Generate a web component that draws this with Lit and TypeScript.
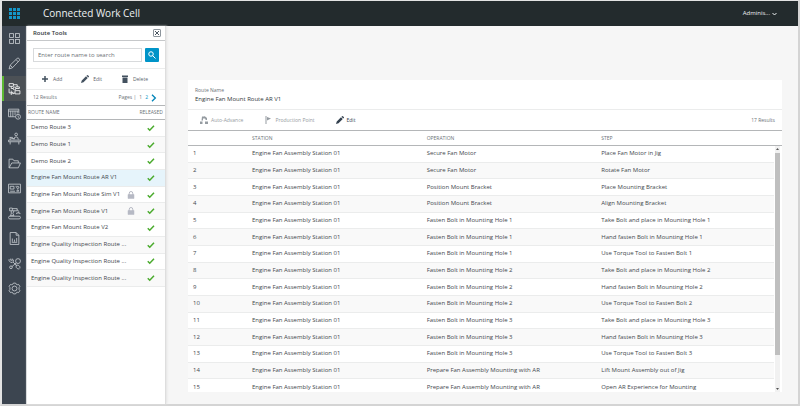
import { LitElement, html, css, svg, nothing } from "lit";
import { customElement, state } from "lit/decorators.js";
import { classMap } from "lit/directives/class-map.js";

const line = (body: unknown) => html`<svg class="nav-icon" viewBox="0 0 24 24" aria-hidden="true">${body}</svg>`;

const icons = {
  tiles: line(svg`<rect x="3" y="3" width="7" height="7"/><rect x="14" y="3" width="7" height="7"/><rect x="3" y="14" width="7" height="7"/><rect x="14" y="14" width="7" height="7"/>`),
  pencil: line(svg`<path d="M2 22l2-7L17 2.500q2-1 3.500.500t.500 3.500L8 20zM15 5l4 4M4 15l4.500 4.500"/>`),
  route: line(svg`<path d="M2 3h8v5H2zM13 16h9v6h-9zM10 5h7v4M6 8v4h4M14 12h7v-3h-7M2 12v8h7M6 16v8M9 18v4l4-2"/><circle cx="12" cy="12" r="2.500"/>`),
  schedule: line(svg`<path d="M14 18H1V4h19v8M1 7.500h19M5 7v11M9 7v11M13 7v8M17 7v5"/><circle cx="18.500" cy="18" r="4.500"/><path d="M18.500 15.500V18l2 1.500"/>`),
  station: line(svg`<circle cx="15" cy="4.500" r="2.500"/><path d="M11 14q0-5 4-5t4 5M1 15h22v3H1zM4 18v5M20 18v5M3 10h6M4 10v5M6 12h6"/>`),
  folder: line(svg`<path d="M2 20V4h7l2 3h8v4M2 20l5-9h16l-4 9z"/>`),
  panel: line(svg`<path d="M1 4h22v16H1zM4 8h7v5H4zM4 17h9M16 17l2-3 2 3zM14 8h2"/><circle cx="18" cy="10" r="2"/>`),
  robot: line(svg`<path d="M3 2h5v5H3zM8 3h9v4H8M17 5l3 3M6 7v6l-2 3h7l-2-4 2-5M19 8v3M16 13v-2h6v2"/><rect x="1" y="17" width="22" height="5" rx="2.500"/>`),
  report: line(svg`<path d="M4 1h11l5 5v17H4zM15 1v5h5M8 18v-6M12 18v-4M16 18v-7M7 19h10"/>`),
  tools: line(svg`<circle cx="18.500" cy="7.500" r="4.500"/><path d="M15 11l-8 7M2 4v3l3 3h3l2-2V5M5 3v3h3V3M9 9l7 7M15 15h4l3 3v3M15 15v4l3 3h3"/><circle cx="5.500" cy="19" r="2.500"/>`),
  gear: line(svg`<circle cx="12" cy="12" r="4.500"/><path d="M10 2h4l1 2 2 1 2.500-.500L22 8l-1.500 2v4l1.500 2-2.500 3.500L17 19l-2 1-1 2h-4l-1-2-2-1-2.500.500L2 16l1.500-2v-4L2 8l2.500-3.500L7 5l2-1z"/>`),
};

const solid = (body: unknown) => html`<svg class="tool-icon" viewBox="0 0 16 16" aria-hidden="true">${body}</svg>`;
const plusIcon = solid(svg`<path d="M6.500 2h3v4.500H14v3H9.500V14h-3V9.500H2v-3h4.500z"/>`);
const editIcon = solid(svg`<path d="M0 16l1.500-5L10 2.500 13.500 6 5 14.500zM11 1.500L12.500 0q1 0 2.500 1.500T16 3.500L14.500 5z"/>`);
const deleteIcon = solid(svg`<path d="M2 1h12v3H2zM3 5h10v11H3z"/>`);
const advanceIcon = solid(svg`<path d="M0 11h5v5H0zM10 11h6v5h-6zM4 1h5v4H6v4H3zM9 0l5 4v4h-3V6L8 4z"/>`);
const flagIcon = solid(svg`<path d="M3 0h2v16H3zM6 2l8 3-8 4z"/>`);

interface Route { name: string; locked?: boolean }

const NAV: [string, keyof typeof icons][] = [
  ["Dashboard", "tiles"], ["Editor", "pencil"], ["Routes", "route"], ["Schedule", "schedule"],
  ["Stations", "station"], ["Files", "folder"], ["Panels", "panel"], ["Equipment", "robot"],
  ["Reports", "report"], ["Tools", "tools"], ["Settings", "gear"],
];

const ROUTES: Route[] = [
  { name: "Demo Route 3" }, { name: "Demo Route 1" }, { name: "Demo Route 2" },
  { name: "Engine Fan Mount Route AR V1" },
  { name: "Engine Fan Mount Route Sim V1", locked: true },
  { name: "Engine Fan Mount Route V1", locked: true },
  { name: "Engine Fan Mount Route V2" },
  { name: "Engine Quality Inspection Route ..." },
  { name: "Engine Quality Inspection Route ..." },
  { name: "Engine Quality Inspection Route ..." },
];

const hole = (n: number): [string, string][] => [
  [`Fasten Bolt in Mounting Hole ${n}`, `Take Bolt and place in Mounting Hole ${n}`],
  [`Fasten Bolt in Mounting Hole ${n}`, `Hand fasten Bolt in Mounting Hole ${n}`],
  [`Fasten Bolt in Mounting Hole ${n}`, `Use Torque Tool to Fasten Bolt ${n}`],
];

const STEPS: [string, string][] = [
  ["Secure Fan Motor", "Place Fan Motor in Jig"],
  ["Secure Fan Motor", "Rotate Fan Motor"],
  ["Position Mount Bracket", "Place Mounting Bracket"],
  ["Position Mount Bracket", "Align Mounting Bracket"],
  ...hole(1), ...hole(2), ...hole(3),
  ["Prepare Fan Assembly Mounting with AR", "Lift Mount Assembly out of Jig"],
  ["Prepare Fan Assembly Mounting with AR", "Open AR Experience for Mounting"],
];

const shared = css`
  * { box-sizing: border-box; }
  button { font: inherit; color: inherit; background: none; border: 0; padding: 0; display: flex; align-items: center; cursor: pointer; }
  table { border-collapse: separate; border-spacing: 0; table-layout: fixed; width: 100%; }
  th { font-weight: 400; text-align: left; color: #6c7278; font-size: 5px; white-space: nowrap; padding: 0; border-bottom: 1px solid #b4b6b8; }
  td { padding: 0; white-space: nowrap; border-bottom: 1px solid #ebecec; }
  tbody tr { background: #fff; }
  tbody tr:nth-child(even) { background: #f9f9f9; }
  .tool-icon { width: 8px; height: 8px; fill: currentColor; flex: none; }
`;

@customElement("route-tools")
export class RouteTools extends LitElement {
  @state() private selected = 3;

  static styles = [shared, css`
    :host { display: flex; flex-direction: column; background: #fff; border-left: 1px solid #d9dbdd; border-right: 1px solid #dedede; box-shadow: 1px 0 2px #e4e4e4; }
    .title { display: flex; align-items: center; justify-content: space-between; height: 15px; padding: 0 4px 0 6px; border-bottom: 1px solid #c6c8ca; color: #33383c; }
    h2 { margin: 0; font-size: 6px; font-weight: 600; }
    .close { width: 8px; height: 8px; border: 1px solid #8d959c; border-radius: 1px; justify-content: center; }
    .close svg { width: 4px; height: 4px; stroke: #4c5863; stroke-width: 2; }
    .search { display: flex; gap: 3px; padding: 7px 6px 6px; border-bottom: 1px solid #ebecec; }
    input { flex: 1; min-width: 0; height: 14px; padding: 0 4px; border: 1px solid #d8dadc; font: inherit; color: #444; outline: none; background: #fff; }
    input::placeholder { color: #6c7176; opacity: 1; }
    .go { width: 14px; height: 14px; background: #0094c8; border-radius: 1px; justify-content: center; }
    .go svg { width: 8px; height: 8px; fill: none; stroke: #fff; stroke-width: 2; }
    .tools { display: flex; justify-content: space-between; height: 21px; padding: 0 17px 0 14px; border-bottom: 1px solid #ebecec; font-size: 5px; color: #5b636b; }
    .tools button { gap: 4px; }
    .tools .tool-icon { color: #43515f; }
    .summary { display: flex; align-items: center; justify-content: space-between; height: 16px; padding: 0 8px 0 6px; border-bottom: 1px solid #b4b6b8; font-size: 5px; color: #6c7278; }
    .pages { display: flex; align-items: center; gap: 3px; }
    .pages a { display: flex; color: #0094c8; text-decoration: none; }
    .pages svg { width: 6px; height: 8px; fill: none; stroke: #0084b8; stroke-width: 2; }
    table { height: 181px; }
    thead tr { height: 14px; }
    .name { padding-left: 1px; }
    .released { width: 30px; padding-right: 2px; text-align: right; }
    .lock { width: 8px; }
    td.label { padding-left: 4px; }
    tbody tr.on { background: #e6f4fb; }
    .tick, .padlock { display: block; width: 8px; height: 8px; }
    .tick { margin-left: 12px; fill: none; stroke: #4bab2e; stroke-width: 3; }
    .padlock { fill: #b6b9c4; stroke: #b6b9c4; }
  `];

  render() {
    return html`
      <div class="title"><h2>Route Tools</h2>
        <button class="close" aria-label="Close"><svg viewBox="0 0 8 8"><path d="M0 0l8 8M8 0L0 8"/></svg></button></div>
      <div class="search">
        <input type="text" aria-label="Route name" placeholder="Enter route name to search">
        <button class="go" aria-label="Search"><svg viewBox="0 0 16 16"><circle cx="6" cy="6" r="4.500"/><path d="M9 9l6 6"/></svg></button>
      </div>
      <div class="tools">
        <button>${plusIcon}Add</button><button>${editIcon}Edit</button><button>${deleteIcon}Delete</button>
      </div>
      <div class="summary"><span>12 Results</span>
        <nav class="pages" aria-label="Pages"><span>Pages |</span><span>1</span><a href="#2">2</a>
          <a href="#next" aria-label="Next page"><svg viewBox="0 0 8 12"><path d="M1 1l5 5-5 5"/></svg></a></nav></div>
      <table>
        <thead><tr><th class="name">ROUTE NAME</th><th class="lock"></th><th class="released">RELEASED</th></tr></thead>
        <tbody>${ROUTES.map((r, i) => html`
          <tr class=${classMap({ on: i === this.selected })} @click=${() => { this.selected = i; }}>
            <td class="label">${r.name}</td>
            <td>${r.locked ? html`<svg class="padlock" viewBox="0 0 16 16" role="img" aria-label="Locked"><path d="M2 7h12v8H2z"/><path d="M4.500 8V4.500q0-3.500 3.500-3.500t3.500 3.500V8" fill="none" stroke-width="2"/></svg>` : nothing}</td>
            <td><svg class="tick" viewBox="0 0 16 16" role="img" aria-label="Released"><path d="M1.500 8.500l4 4L14 3.500"/></svg></td>
          </tr>`)}</tbody>
      </table>`;
  }
}

@customElement("route-detail")
export class RouteDetail extends LitElement {
  static styles = [shared, css`
    :host { display: flex; flex-direction: column; min-width: 0; min-height: 0; background: #fff; }
    .name { height: 30px; padding: 5px 7px 0; border-bottom: 1px solid #ebecec; color: #33383c; }
    .name span, .name strong { display: block; font-weight: 400; line-height: 9px; }
    .name span { font-size: 5px; color: #6c7278; line-height: 10px; }
    .tools { display: flex; align-items: center; height: 21px; padding: 0 7px 0 12px; gap: 21px; border-bottom: 1px solid #b4b6b8; font-size: 5px; color: #6c7278; }
    .tools button { gap: 3px; color: #33414f; }
    .tools button:disabled { color: #959ba1; }
    .count { margin-left: auto; }
    .scroll { position: relative; flex: 1; min-height: 0; overflow: hidden; }
    table { height: 265px; }
    thead tr { height: 15px; }
    .num { width: 64px; }
    .third { width: 29.4%; }
    td:first-child { padding-left: 5px; }
    .bar { position: absolute; inset: 15px 0 0 auto; width: 8px; display: flex; flex-direction: column; background: #f1f1f1; border-right: 2px solid #fff; border-left: 1px solid #fff; }
    .bar svg { width: 5px; height: 7px; fill: #555; flex: none; }
    .thumb { flex: 1; background: #bfbfbf; }
    .rest { height: 15%; display: flex; align-items: flex-end; }
  `];

  render() {
    return html`
      <div class="name"><span>Route Name</span><strong>Engine Fan Mount Route AR V1</strong></div>
      <div class="tools">
        <button disabled>${advanceIcon}Auto-Advance</button>
        <button disabled>${flagIcon}Production Point</button>
        <button>${editIcon}Edit</button>
        <span class="count">17 Results</span>
      </div>
      <div class="scroll">
        <table>
          <thead><tr><th class="num"></th><th class="third">STATION</th><th class="third">OPERATION</th><th>STEP</th></tr></thead>
          <tbody>${STEPS.map(([operation, step], i) => html`
            <tr><td>${i + 1}</td><td>Engine Fan Assembly Station 01</td><td>${operation}</td><td>${step}</td></tr>`)}</tbody>
        </table>
        <div class="bar" aria-hidden="true">
          <svg viewBox="0 0 5 7"><path d="M1 4l1.500-2L4 4z"/></svg>
          <div class="thumb"></div>
          <div class="rest"><svg viewBox="0 0 5 7"><path d="M1 3l1.500 2L4 3z"/></svg></div>
        </div>
      </div>`;
  }
}

@customElement("app-root")
export class AppRoot extends LitElement {
  static styles = [shared, css`
    :host { display: grid; grid-template: 25px minmax(0, 1fr) / 24px 140px minmax(0, 1fr); height: 100vh; box-sizing: border-box;
      border: solid #e3e3e3; border-width: 1px 2px 2px; border-right-color: #d4d4d4; border-bottom-color: #d4d4d4;
      background: #f6f6f6; font: 6px/9px "Open Sans", "Noto Sans", sans-serif; color: #43484d; }
    header { grid-column: 1 / -1; display: flex; align-items: center; background: #232b2d; color: #eef1f2; }
    .launcher { width: 24px; justify-content: center; }
    .launcher svg { width: 11px; height: 11px; fill: #1496c8; }
    h1 { flex: 1; margin: 0; padding-left: 17px; font-size: 10px; line-height: 15px; font-weight: 400; }
    .user { gap: 2px; margin-right: 21px; }
    .user svg { width: 5px; height: 4px; fill: none; stroke: currentColor; }
    .side { display: flex; flex-direction: column; background: #3c4550; }
    .side button { height: 25px; flex: none; justify-content: center; color: #c9ced3; border: solid transparent; border-width: 0 2px; }
    .side .on { background: #4c5156; border-left-color: #5cb832; color: #fff; }
    .nav-icon { width: 13px; height: 13px; flex: none; fill: none; stroke: currentColor; stroke-width: 1.500; }
    main { display: grid; min-width: 0; min-height: 0; padding: 54px 16px 12px 22px; }
  `];

  render() {
    return html`
      <header>
        <button class="launcher" aria-label="Applications"><svg viewBox="0 0 11 11">${[0, 4, 8].map((y) => [0, 4, 8].map((x) => svg`<rect x=${x} y=${y} width="3" height="3"/>`))}</svg></button>
        <h1>Connected Work Cell</h1>
        <button class="user">Adminis...<svg viewBox="0 0 5 4"><path d="M.500 1l2 2 2-2"/></svg></button>
      </header>
      <nav class="side" aria-label="Main">${NAV.map(([label, icon]) => html`
        <button class=${classMap({ on: icon === "route" })} aria-label=${label}>${icons[icon]}</button>`)}</nav>
      <route-tools></route-tools>
      <main><route-detail></route-detail></main>`;
  }
}
